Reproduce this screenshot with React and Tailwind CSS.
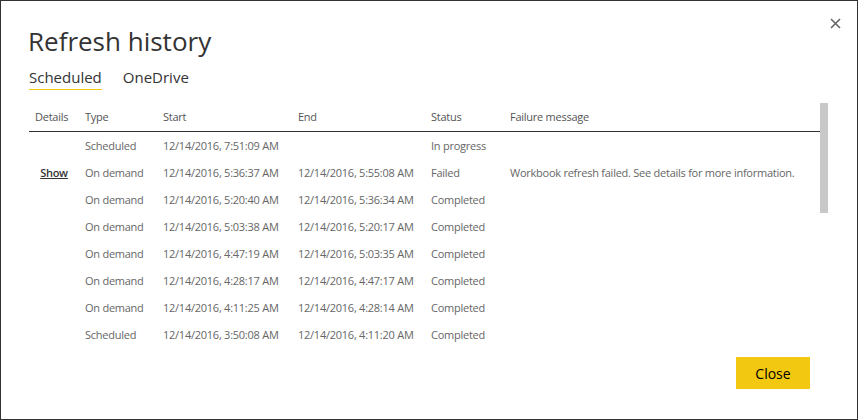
import React from 'react';

const rows = [
  { type: 'Scheduled', start: '12/14/2016, 7:51:09 AM', end: '', status: 'In progress', msg: '' },
  { type: 'On demand', start: '12/14/2016, 5:36:37 AM', end: '12/14/2016, 5:55:08 AM', status: 'Failed', msg: 'Workbook refresh failed. See details for more information.', show: true },
  { type: 'On demand', start: '12/14/2016, 5:20:40 AM', end: '12/14/2016, 5:36:34 AM', status: 'Completed', msg: '' },
  { type: 'On demand', start: '12/14/2016, 5:03:38 AM', end: '12/14/2016, 5:20:17 AM', status: 'Completed', msg: '' },
  { type: 'On demand', start: '12/14/2016, 4:47:19 AM', end: '12/14/2016, 5:03:35 AM', status: 'Completed', msg: '' },
  { type: 'On demand', start: '12/14/2016, 4:28:17 AM', end: '12/14/2016, 4:47:17 AM', status: 'Completed', msg: '' },
  { type: 'On demand', start: '12/14/2016, 4:11:25 AM', end: '12/14/2016, 4:28:14 AM', status: 'Completed', msg: '' },
  { type: 'Scheduled', start: '12/14/2016, 3:50:08 AM', end: '12/14/2016, 4:11:20 AM', status: 'Completed', msg: '' },
];

const cols = 'grid grid-cols-[50px_78px_135px_133px_79px_316px]';

const App = () => {
  return (
    <div
      className="w-[858px] h-[420px] bg-white border border-[#333] flex flex-col relative"
      style={{ fontFamily: '"Open Sans", "Noto Sans", sans-serif' }}
    >
      <button className="absolute right-[16px] top-[17px] text-[#666]">
        <svg width="11" height="11" viewBox="0 0 11 11">
          <path d="M1 1L10 10M10 1L1 10" stroke="#666" strokeWidth="1.6" />
        </svg>
      </button>

      <h1 className="pl-[27px] pt-[22px] text-[26px] leading-[36px] text-[#333] font-normal">
        Refresh history
      </h1>

      <div className="flex gap-[21px] pl-[28px] pt-[8px] text-[15px] text-[#333]">
        <div className="border-b border-[#f2c811] leading-[20px] pb-[2px]">Scheduled</div>
        <div className="leading-[20px]">OneDrive</div>
      </div>

      <div className="flex pl-[28px] pt-[13px]">
        <div className="w-[791px] text-[11px] tracking-[-0.25px]">
          <div className={`${cols} h-[29px] items-center border-b border-[#333] text-[#555]`}>
            <div className="pl-[6px]">Details</div>
            <div className="pl-[6px]">Type</div>
            <div className="pl-[6px]">Start</div>
            <div className="pl-[6px]">End</div>
            <div className="pl-[6px]">Status</div>
            <div className="pl-[6px]">Failure message</div>
          </div>
          <div className="pt-[1px]">
            {rows.map((r, i) => (
              <div key={i} className={`${cols} h-[27px] items-center text-[#666]`}>
                <div className="text-center">
                  {r.show && <span className="underline text-[#333] font-semibold">Show</span>}
                </div>
                <div className="pl-[6px]">{r.type}</div>
                <div className="pl-[6px]">{r.start}</div>
                <div className="pl-[6px]">{r.end}</div>
                <div className="pl-[6px]">{r.status}</div>
                <div className="pl-[6px]">{r.msg}</div>
              </div>
            ))}
          </div>
        </div>
        <div className="w-[8px]">
          <div className="h-[110px] bg-[#c8c8c8]" />
        </div>
      </div>

      <div className="flex justify-end pr-[47px] pt-[8px]">
        <button className="w-[74px] h-[32px] bg-[#f2c811] text-[14px] text-black">Close</button>
      </div>
    </div>
  );
};

export default App;
